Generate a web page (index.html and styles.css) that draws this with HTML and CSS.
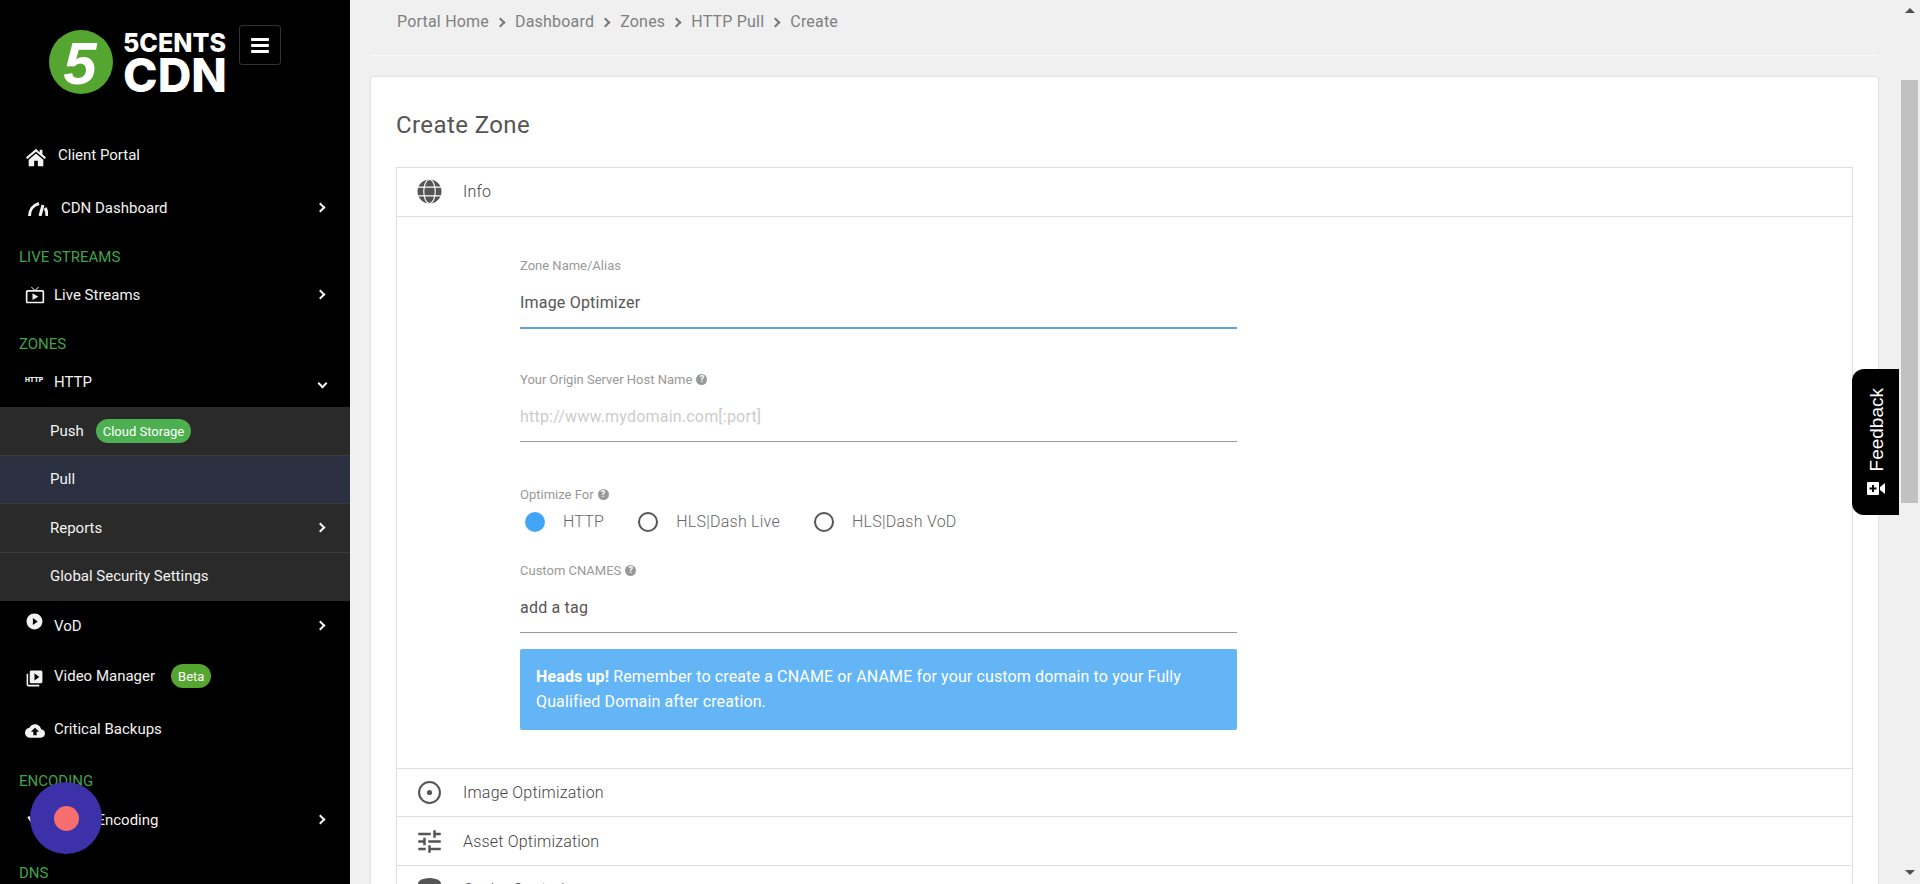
FILE: index.html
```html
<!DOCTYPE html>
<html lang="en">
<head>
    <meta charset="UTF-8">
    <meta name="viewport" content="width=device-width, initial-scale=1.0">
    <title>Create Zone</title>
    <link rel="stylesheet" href="styles.css">
</head>
<body>
    <aside class="sidebar">
        <div class="brand">
            <svg class="logo" width="190" height="85" viewBox="0 0 190 85">
                <circle cx="32" cy="38" r="32" fill="#55a630"/>
                <text x="31" y="60" text-anchor="middle" class="logo-five">5</text>
                <text x="74" y="28" textLength="103" lengthAdjust="spacingAndGlyphs" class="logo-top">5CENTS</text>
                <text x="74" y="68" textLength="104" lengthAdjust="spacingAndGlyphs" class="logo-bottom">CDN</text>
            </svg>
            <button class="menu-btn"><span></span><span></span><span></span></button>
        </div>

        <a class="nav-item">
            <span class="nav-icon icon-home">
                <svg width="22" height="22" viewBox="0 0 24 24"><path d="M12 3 1 12.500l1.600 1.800L12 6.200l9.400 8.100 1.600-1.800-4-3.500V4h-3v3z"/><path d="M12 8.200 4 15v7h6v-6h4v6h6v-7z"/></svg>
            </span>
            Client Portal
        </a>
        <a class="nav-item nav-second">
            <span class="nav-icon icon-gauge">
                <svg width="20" height="14" viewBox="0 0 20 14"><path d="M1.500 14C1.500 8 5 3 11 1.500" class="line"/><path d="M12 14l3-11" class="line"/><path d="M17 6c1.500 2 2 4.500 2 8" class="line"/></svg>
            </span>
            CDN Dashboard
            <span class="chevron"></span>
        </a>

        <div class="nav-section">LIVE STREAMS</div>
        <a class="nav-item">
            <span class="nav-icon">
                <svg width="20" height="20" viewBox="0 0 24 24"><path d="M21 6h-7.590l3.290-3.290L16 2l-4 4-4-4-.71.71L10.590 6H3c-1.100 0-2 .89-2 2v12c0 1.100.9 2 2 2h18c1.100 0 2-.9 2-2V8c0-1.110-.9-2-2-2zm0 14H3V8h18v12zM9 10v8l7-4z"/></svg>
            </span>
            Live Streams
            <span class="chevron"></span>
        </a>

        <div class="nav-section">ZONES</div>
        <a class="nav-item">
            <span class="nav-icon icon-http">HTTP</span>
            HTTP
            <span class="chevron chevron-down"></span>
        </a>
        <div class="submenu">
            <a class="sub-item">Push <span class="badge">Cloud Storage</span></a>
            <a class="sub-item sub-active">Pull</a>
            <a class="sub-item">Reports <span class="chevron"></span></a>
            <a class="sub-item">Global Security Settings</a>
        </div>

        <a class="nav-item">
            <span class="nav-icon icon-play">
                <svg width="19" height="19" viewBox="0 0 24 24"><path d="M12 2C6.480 2 2 6.480 2 12s4.480 10 10 10 10-4.480 10-10S17.520 2 12 2zm-2 14.500v-9l6 4.500-6 4.500z"/></svg>
            </span>
            VoD
            <span class="chevron"></span>
        </a>
        <a class="nav-item">
            <span class="nav-icon icon-down">
                <svg width="19" height="19" viewBox="0 0 24 24"><path d="M4 6H2v14c0 1.100.9 2 2 2h14v-2H4V6zm16-4H8c-1.100 0-2 .9-2 2v12c0 1.100.9 2 2 2h12c1.100 0 2-.9 2-2V4c0-1.100-.9-2-2-2zm-8 12.500v-9l6 4.500-6 4.500z"/></svg>
            </span>
            Video Manager
            <span class="badge badge-beta">Beta</span>
        </a>
        <a class="nav-item nav-backups">
            <span class="nav-icon icon-down">
                <svg width="20" height="20" viewBox="0 0 24 24"><path d="M19.350 10.040C18.670 6.590 15.640 4 12 4 9.110 4 6.600 5.640 5.350 8.040 2.340 8.360 0 10.910 0 14c0 3.310 2.690 6 6 6h13c2.760 0 5-2.240 5-5 0-2.640-2.050-4.780-4.650-4.960zM14 13v4h-4v-4H7l5-5 5 5h-3z"/></svg>
            </span>
            Critical Backups
        </a>

        <div class="nav-section nav-section-encoding">ENCODING</div>
        <a class="nav-item">
            <span class="nav-icon">
                <svg width="20" height="20" viewBox="0 0 24 24"><path d="M4 8l6 9 10-12" class="line"/></svg>
            </span>
            Cloud Encoding
            <span class="chevron"></span>
        </a>
        <div class="nav-section nav-section-dns">DNS</div>
    </aside>

    <main class="main">
        <nav class="crumbs">
            <span>Portal Home</span><i class="crumb-sep"></i>
            <span>Dashboard</span><i class="crumb-sep"></i>
            <span>Zones</span><i class="crumb-sep"></i>
            <span>HTTP Pull</span><i class="crumb-sep"></i>
            <span>Create</span>
        </nav>

        <section class="card">
            <h1>Create Zone</h1>
            <div class="accordion">
                <div class="acc-head">
                    <svg class="acc-icon" width="25" height="25" viewBox="0 0 24 24">
                        <circle cx="12" cy="12" r="11.500" fill="#555"/>
                        <ellipse cx="12" cy="12" rx="5.500" ry="11.500" fill="none" stroke="#fff" stroke-width="1.100"/>
                        <path d="M0 7.800h24M0 16.200h24" stroke="#fff" stroke-width="1.100"/>
                    </svg>
                    Info
                </div>
                <div class="acc-body">
                    <div class="field-label">Zone Name/Alias</div>
                    <input class="field-input field-focus" type="text" value="Image Optimizer">

                    <div class="field-label field-gap">Your Origin Server Host Name <span class="help">?</span></div>
                    <input class="field-input" type="text" placeholder="http://www.mydomain.com[:port]">

                    <div class="field-label field-gap-radio">Optimize For <span class="help">?</span></div>
                    <div class="radios">
                        <span class="radio radio-on"></span><span class="radio-text">HTTP</span>
                        <span class="radio"></span><span class="radio-text">HLS|Dash Live</span>
                        <span class="radio"></span><span class="radio-text">HLS|Dash VoD</span>
                    </div>

                    <div class="field-label field-gap-small">Custom CNAMES <span class="help">?</span></div>
                    <input class="field-input" type="text" value="add a tag">

                    <div class="alert"><b>Heads up!</b> Remember to create a CNAME or ANAME for your custom domain to your Fully Qualified Domain after creation.</div>
                </div>
                <div class="acc-head">
                    <svg class="acc-icon" width="25" height="25" viewBox="0 0 24 24"><circle cx="12" cy="12" r="10" fill="none" stroke="#555" stroke-width="2"/><circle cx="12" cy="12" r="2.500" fill="#555"/></svg>
                    Image Optimization
                </div>
                <div class="acc-head">
                    <svg class="acc-icon" width="25" height="25" viewBox="2 2 20 20"><path fill="#555" d="M3 17v2h6v-2H3zM3 5v2h10V5H3zm10 16v-2h8v-2h-8v-2h-2v6h2zM7 9v2H3v2h4v2h2V9H7zm14 4v-2H11v2h10zm-6-4h2V7h4V5h-4V3h-2v6z"/></svg>
                    Asset Optimization
                </div>
                <div class="acc-head">
                    <svg class="acc-icon" width="25" height="25" viewBox="0 0 24 24"><ellipse cx="12" cy="6" rx="11" ry="5" fill="#555"/><path fill="#555" d="M1 6h22v14H1z"/></svg>
                    Cache Control
                </div>
            </div>
        </section>
    </main>

    <div class="scrollbar">
        <span class="arrow-up"></span>
        <span class="thumb"></span>
        <span class="arrow-down"></span>
    </div>

    <div class="feedback">
        <svg class="feedback-icon" width="18" height="13" viewBox="0 0 18 13"><path fill-rule="evenodd" d="M1 0h10a1 1 0 0 1 1 1v11a1 1 0 0 1-1 1H1a1 1 0 0 1-1-1V1a1 1 0 0 1 1-1zm4 3v2.500H2.500v2H5V10h2V7.500h2.500v-2H7V3z"/><path d="M13 5l5-4v11l-5-4z"/></svg>
        <span class="feedback-text">Feedback</span>
    </div>

    <div class="record"><span class="record-dot"></span></div>
</body>
</html>
```

FILE: styles.css
```css
* {
    margin: 0;
    padding: 0;
    box-sizing: border-box;
    font-family: Roboto, sans-serif;
}

body {
    height: 100vh;
    overflow: hidden;
    display: flex;
    background: #f0f0f0;
}

/* sidebar */
.sidebar {
    width: 350px;
    flex-shrink: 0;
    height: 884px;
    overflow: hidden;
    background: #000;
    color: #f2f2f2;
    font-size: 15px;
}

.brand {
    height: 130px;
    display: flex;
    align-items: flex-start;
    padding: 24px 0 0 49px;
}

.logo {
    flex-shrink: 0;
}

.logo-five {
    fill: #fff;
    font-family: "Liberation Sans", sans-serif;
    font-size: 60px;
    font-weight: 700;
    font-style: italic;
}

.logo-top {
    fill: #fff;
    font-family: Inter, sans-serif;
    font-size: 26px;
    font-weight: 800;
}

.logo-bottom {
    fill: #fff;
    font-family: Inter, sans-serif;
    font-size: 47px;
    font-weight: 800;
}

.menu-btn {
    width: 42px;
    height: 40px;
    margin-top: 1px;
    display: flex;
    flex-direction: column;
    justify-content: center;
    align-items: center;
    gap: 3px;
    background: #000;
    border: 1px solid #333;
    border-radius: 3px;
}

.menu-btn span {
    width: 18px;
    height: 3px;
    background: #fff;
    border-radius: 1px;
}

.nav-item {
    height: 50px;
    display: flex;
    align-items: center;
    padding-left: 25px;
    position: relative;
}

.nav-second {
    margin-top: 3px;
}

.nav-backups {
    margin: 3px 0 1px;
}

.nav-icon {
    width: 29px;
    flex-shrink: 0;
    display: flex;
    align-items: center;
}

.nav-icon svg {
    fill: #f2f2f2;
}

.nav-icon svg .line {
    fill: none;
    stroke: #f2f2f2;
    stroke-width: 3;
}

.icon-home {
    width: 33px;
    padding-top: 4px;
}

.icon-gauge {
    width: 36px;
    padding: 2px 0 0 3px;
}

.icon-http {
    font-size: 7px;
    font-weight: 900;
    padding-bottom: 4px;
}

.icon-play {
    padding-bottom: 9px;
}

.icon-down {
    padding-top: 4px;
}

.chevron {
    position: absolute;
    right: 26px;
    top: 50%;
    width: 7px;
    height: 7px;
    margin-top: -4px;
    border-top: 2px solid #f2f2f2;
    border-right: 2px solid #f2f2f2;
    transform: rotate(45deg);
}

.chevron-down {
    right: 24px;
    margin-top: -2px;
    transform: rotate(135deg);
}

.nav-section {
    height: 37px;
    padding: 15px 0 0 19px;
    line-height: 18px;
    color: #3fa34d;
    font-size: 15px;
}

.nav-section-encoding {
    height: 40px;
    padding-top: 17px;
}

.nav-section-dns {
    padding-top: 19px;
}

.submenu {
    background: #2a2a2a;
}

.sub-item {
    height: 48.500px;
    display: flex;
    align-items: center;
    padding: 1px 0 0 50px;
    position: relative;
    border-bottom: 1px solid #3a3a3a;
}

.sub-item:last-child {
    padding: 0 0 2px 50px;
    border-bottom: none;
}

.sub-active {
    padding-top: 0;
    background: #2a3040;
}

.badge {
    margin-left: 12px;
    height: 24px;
    padding: 0 7px;
    display: inline-flex;
    align-items: center;
    border-radius: 12px;
    background: #4caf50;
    color: #fff;
    font-size: 13px;
}

.badge-beta {
    margin-left: 16px;
    background: #55a630;
}

/* main */
.main {
    flex: 1;
    min-width: 0;
    height: 884px;
    overflow: hidden;
    padding: 0 23px 0 21px;
}

.crumbs {
    height: 56px;
    padding: 12px 0 0 26px;
    display: flex;
    align-items: flex-start;
    line-height: 20px;
    font-size: 16px;
    letter-spacing: 0.2px;
    color: #808080;
    border-bottom: 1px solid #fafafa;
}

.crumb-sep {
    width: 7px;
    height: 7px;
    margin: 7px 11px 0 8px;
    border-top: 2px solid #777;
    border-right: 2px solid #777;
    transform: rotate(45deg);
}

.card {
    margin-top: 21px;
    height: 900px;
    padding: 24px 25px 0;
    background: #fff;
    border-radius: 3px;
    box-shadow: 0 0 2px rgba(0,0,0,0.2);
}

h1 {
    font-size: 24px;
    font-weight: 400;
    line-height: 48px;
    color: #555;
    letter-spacing: 0.4px;
    margin-bottom: 18px;
}

.accordion {
    border: 1px solid #ddd;
    border-bottom: none;
}

.acc-head {
    height: 48.500px;
    display: flex;
    align-items: center;
    padding-left: 20px;
    font-size: 16px;
    font-weight: 300;
    letter-spacing: 0.2px;
    color: #444;
    border-bottom: 1px solid #ddd;
}

.acc-body ~ .acc-head {
    padding-top: 1px;
}

.acc-icon {
    margin-right: 21px;
    flex-shrink: 0;
}

.acc-body {
    padding: 40px 0 38px 123px;
    border-bottom: 1px solid #ddd;
}

.acc-body > * {
    width: 717px;
}

.field-label {
    height: 18px;
    line-height: 18px;
    display: flex;
    align-items: center;
    gap: 4px;
    font-size: 13px;
    color: #999;
}

.field-gap {
    margin-top: 42px;
}

.field-gap-radio {
    margin-top: 44px;
}

.field-gap-small {
    margin-top: 22px;
}

.help {
    width: 11px;
    height: 11px;
    border-radius: 50%;
    background: #999;
    color: #fff;
    font-size: 9px;
    font-weight: 700;
    line-height: 11px;
    text-align: center;
}

.field-input {
    display: block;
    height: 53px;
    padding-top: 4px;
    border: none;
    border-bottom: 1px solid #999;
    outline: none;
    font-size: 16px;
    letter-spacing: 0.2px;
    color: #555;
    background: transparent;
}

.field-input::placeholder {
    color: #ccc;
}

.field-focus {
    height: 54px;
    border-bottom: 2px solid #5aa5d0;
}

.radios {
    height: 36px;
    display: flex;
    align-items: center;
    padding-left: 5px;
}

.radio {
    width: 20px;
    height: 20px;
    flex-shrink: 0;
    border: 2px solid #555;
    border-radius: 50%;
}

.radio-on {
    background: #42a5f5;
    border: none;
}

.radio-text {
    margin: 0 34px 0 18px;
    font-size: 16px;
    font-weight: 300;
    letter-spacing: 0.25px;
    color: #666;
}

.alert {
    margin-top: 16px;
    height: 81px;
    padding: 15px 16px;
    background: #64b5f6;
    border-radius: 2px;
    color: #fff;
    font-size: 16px;
    letter-spacing: 0.13px;
    line-height: 25px;
}

/* fake browser scrollbar */
.scrollbar {
    width: 19px;
    height: 884px;
    flex-shrink: 0;
    position: relative;
    background: #f0f0f0;
}

.thumb {
    position: absolute;
    left: 0;
    top: 80px;
    width: 17px;
    height: 423px;
    background: #c1c1c1;
}

.arrow-up, .arrow-down {
    position: absolute;
    left: 4px;
    width: 0;
    height: 0;
    border-left: 5px solid transparent;
    border-right: 5px solid transparent;
}

.arrow-up {
    top: 8px;
    border-bottom: 5px solid #505050;
}

.arrow-down {
    bottom: 9px;
    border-top: 5px solid #505050;
}

/* overlays */
.feedback {
    position: fixed;
    left: 1852px;
    top: 369px;
    width: 47px;
    height: 146px;
    display: flex;
    flex-direction: column-reverse;
    align-items: center;
    gap: 11px;
    padding-bottom: 20px;
    background: #000;
    border-radius: 12px 0 0 12px;
    color: #fff;
}

.feedback-text {
    writing-mode: vertical-rl;
    transform: rotate(180deg);
    margin-left: 2px;
    font-family: "Liberation Sans", sans-serif;
    font-size: 19px;
}

.feedback-icon {
    fill: #fff;
}

.record {
    position: fixed;
    left: 30px;
    top: 782px;
    width: 72px;
    height: 72px;
    display: flex;
    align-items: center;
    justify-content: center;
    background: #3c31a8;
    border-radius: 50%;
}

.record-dot {
    width: 25px;
    height: 25px;
    background: #f76e6e;
    border-radius: 50%;
}
```
